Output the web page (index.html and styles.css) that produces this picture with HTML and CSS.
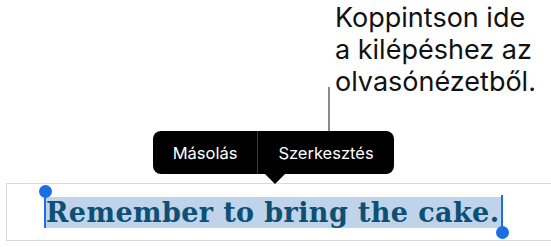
FILE: index.html
```html
<!DOCTYPE html>
<html lang="hu">
<head>
<meta charset="utf-8">
<link rel="stylesheet" href="styles.css">
</head>
<body>
<div class="page">
  <div class="callout">Koppintson ide<br>a kilépéshez az<br>olvasónézetből.</div>
  <div class="leader"></div>
  <div class="menu">
    <span class="item item-left">Másolás</span>
    <span class="sep"></span>
    <span class="item item-right">Szerkesztés</span>
  </div>
  <div class="field">
    <span class="sel">Remember to bring the cake.<span class="handle handle-start"></span><span class="handle handle-end"></span></span>
  </div>
</div>
</body>
</html>
```
FILE: styles.css
```css
html, body {
  margin: 0;
  padding: 0;
  background: #ffffff;
}
.page {
  width: 551px;
  height: 247px;
  position: relative;
  overflow: hidden;
  display: flex;
  flex-direction: column;
}
.callout {
  margin-left: 335px;
  padding-top: 2px;
  font-family: Inter, "Liberation Sans", sans-serif;
  font-size: 27px;
  line-height: 32px;
  color: #111111;
  white-space: nowrap;
}
.leader {
  margin-top: -11px;
  margin-left: 328px;
  width: 2px;
  height: 44px;
  background: #8c8c8c;
}
.menu {
  margin-left: 153px;
  width: 241px;
  height: 43px;
  background: #000000;
  border-radius: 8px;
  display: flex;
  align-items: stretch;
  position: relative;
  font-family: Inter, "Liberation Sans", sans-serif;
  font-size: 16.5px;
  color: #ffffff;
}
.menu::after {
  content: "";
  position: absolute;
  left: 112px;
  top: 43px;
  border-left: 10px solid transparent;
  border-right: 10px solid transparent;
  border-top: 10px solid #000000;
}
.item {
  display: flex;
  align-items: center;
  justify-content: center;
}
.item-left { width: 104px; }
.item-right { flex: 1; }
.sep {
  width: 1px;
  background: #3a3a3a;
}
.field {
  margin-top: 9px;
  margin-left: 6px;
  width: 532px;
  height: 56px;
  border: 1px solid #d9d9d9;
  display: flex;
  align-items: center;
  padding-left: 39px;
  box-sizing: content-box;
}
.sel {
  position: relative;
  background: #bfd4ea;
  color: #0e4f74;
  font-family: "DejaVu Serif", serif;
  font-weight: bold;
  font-size: 27px;
  letter-spacing: 0.4px;
  line-height: 31px;
  padding-right: 2px;
  white-space: nowrap;
}
.handle {
  position: absolute;
  width: 2px;
  background: #1b6fe3;
}
.handle::after {
  content: "";
  position: absolute;
  left: -5.5px;
  width: 13px;
  height: 13px;
  border-radius: 50%;
  background: #1b6fe3;
}
.handle-start {
  left: -2px;
  top: -6px;
  height: 37px;
}
.handle-start::after { top: -6px; }
.handle-end {
  right: -2px;
  top: -2px;
  height: 38px;
}
.handle-end::after { bottom: -6px; }
```
